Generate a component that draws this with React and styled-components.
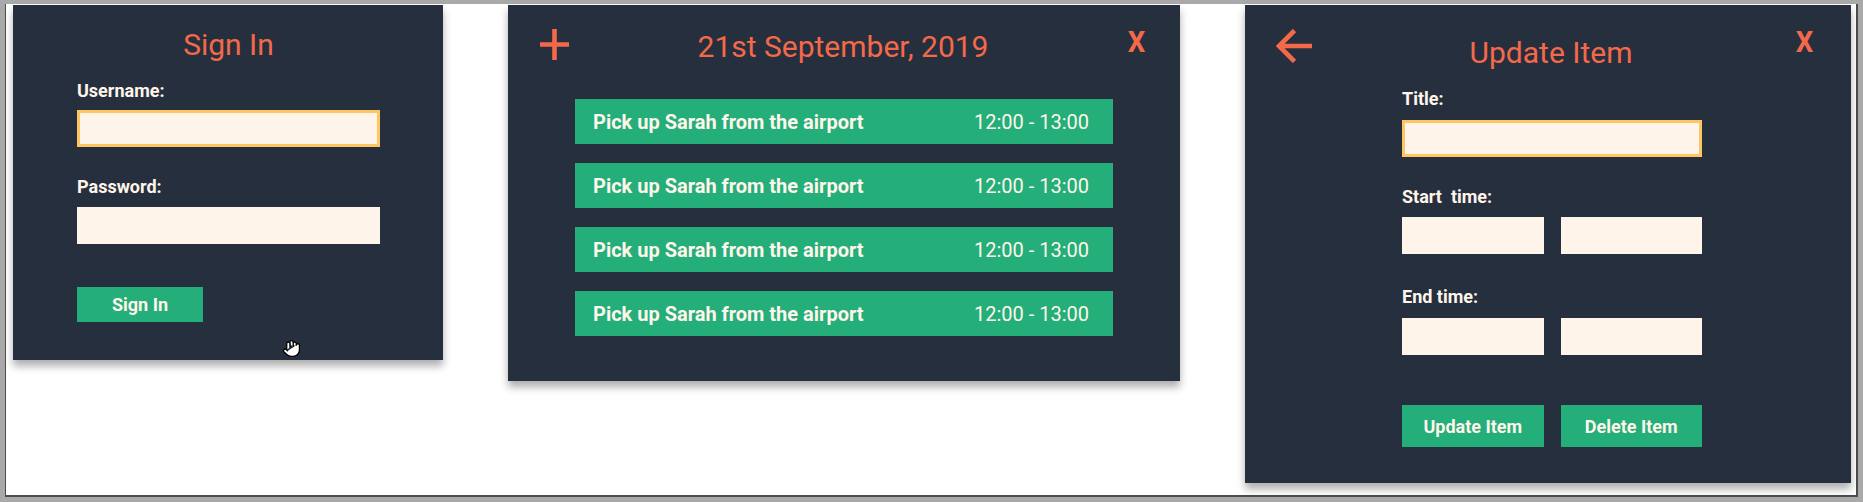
import React from "react";
import styled, { createGlobalStyle } from "styled-components";
import { Hand } from "lucide-react";

const GlobalStyle = createGlobalStyle`
  html, body {
    margin: 0;
    padding: 0;
    background: #a9a9a9;
    font-family: Roboto, "Liberation Sans", sans-serif;
  }
`;

const ORANGE = "#f4694a";
const GREEN = "#23ae7a";
const CREAM = "#fff5ea";
const PANEL = "#262f3d";

const items = [1, 2, 3, 4].map((id) => ({
  id,
  title: "Pick up Sarah from the airport",
  time: "12:00 - 13:00",
}));

const App = () => {
  return (
    <SCPage>
      <GlobalStyle />
      <SCFrame>
        <SCPanel $w={430} $pad="22px 63px 38px 64px">
          <SCTitle>Sign In</SCTitle>
          <SCLabel $mt={17} $mb={9}>Username:</SCLabel>
          <SCInput $active type="text" />
          <SCLabel $mt={29} $mb={10}>Password:</SCLabel>
          <SCInput type="password" />
          <SCButton $mt={43} $w={126} $h={35}>
            Sign In
          </SCButton>
          <SCCursor>
            <Hand size={19} fill="#ffffff" stroke="#000000" strokeWidth={1.6} />
          </SCCursor>
        </SCPanel>

        <SCPanel $w={672} $pad="24px 34px 45px 32px">
          <SCHeader>
            <SCIconButton aria-label="add">
              <svg width="29" height="31" viewBox="0 0 29 31">
                <path
                  d="M14.5 0 V31 M0 15.5 H29"
                  stroke={ORANGE}
                  strokeWidth="4.6"
                  fill="none"
                />
              </svg>
            </SCIconButton>
            <SCTitle>21st September, 2019</SCTitle>
            <SCClose>X</SCClose>
          </SCHeader>
          <SCList>
            {items.map((item) => (
              <SCItem key={item.id}>
                <SCItemTitle>{item.title}</SCItemTitle>
                <SCItemTime>{item.time}</SCItemTime>
              </SCItem>
            ))}
          </SCList>
        </SCPanel>

        <SCPanel $w={606} $pad="24px 37px 36px 29px">
          <SCHeader>
            <SCIconButton aria-label="back">
              <svg width="38" height="34" viewBox="0 0 38 34">
                <path
                  d="M38 17 H6 M20.5 1.5 L5 17 L20.5 32.5"
                  stroke={ORANGE}
                  strokeWidth="4.6"
                  fill="none"
                  strokeLinejoin="miter"
                />
              </svg>
            </SCIconButton>
            <SCTitle $mt={6} $ml={14}>
              Update Item
            </SCTitle>
            <SCClose>X</SCClose>
          </SCHeader>
          <SCForm>
            <SCLabel $mt={17} $mb={11}>Title:</SCLabel>
            <SCInput $active type="text" />
            <SCLabel $mt={29} $mb={10}>{"Start  time:"}</SCLabel>
            <SCPair>
              <SCInput type="text" />
              <SCInput type="text" />
            </SCPair>
            <SCLabel $mt={32} $mb={11}>End time:</SCLabel>
            <SCPair>
              <SCInput type="text" />
              <SCInput type="text" />
            </SCPair>
            <SCPair $mt={50}>
              <SCButton $h={42}>Update Item</SCButton>
              <SCButton $h={42}>Delete Item</SCButton>
            </SCPair>
          </SCForm>
        </SCPanel>
      </SCFrame>
    </SCPage>
  );
};

export default App;

const SCPage = styled.div`
  box-sizing: border-box;
  height: 502px;
  padding: 4px 5px 0 5px;
`;

const SCFrame = styled.div`
  box-sizing: border-box;
  height: 493px;
  background: #ffffff;
  border-left: 1px solid #4d4d4d;
  border-right: 2px solid #4d4d4d;
  border-bottom: 2px solid #4d4d4d;
  padding: 1px 5px 0 7px;
  display: flex;
  align-items: flex-start;
  gap: 65px;
`;

const SCPanel = styled.section`
  position: relative;
  box-sizing: border-box;
  flex-shrink: 0;
  width: ${(props) => props.$w}px;
  padding: ${(props) => props.$pad};
  background: ${PANEL};
  box-shadow: 0 6px 8px rgba(0, 0, 0, 0.32);
  display: flex;
  flex-direction: column;
`;

const SCTitle = styled.h1`
  margin: ${(props) => props.$mt || 0}px 0 0 ${(props) => props.$ml || 0}px;
  font-size: 30px;
  font-weight: 400;
  line-height: 36px;
  color: ${ORANGE};
  text-align: center;
  white-space: nowrap;
`;

const SCLabel = styled.label`
  display: block;
  margin-top: ${(props) => props.$mt}px;
  margin-bottom: ${(props) => props.$mb}px;
  font-size: 18px;
  font-weight: 700;
  line-height: 21px;
  color: ${CREAM};
  white-space: pre;
`;

const SCInput = styled.input`
  display: block;
  box-sizing: border-box;
  width: 100%;
  height: 37px;
  margin: 0;
  padding: 0 8px;
  border: ${(props) => (props.$active ? "3px solid #fdc662" : "none")};
  background: #fff4ea;
  outline: none;
  font-family: Roboto, sans-serif;
  font-size: 16px;
`;

const SCButton = styled.button`
  display: block;
  box-sizing: border-box;
  width: ${(props) => (props.$w ? `${props.$w}px` : "100%")};
  height: ${(props) => props.$h}px;
  margin-top: ${(props) => props.$mt || 0}px;
  padding: 0;
  border: none;
  background: ${GREEN};
  color: ${CREAM};
  font-family: Roboto, sans-serif;
  font-size: 18px;
  font-weight: 700;
  cursor: pointer;
`;

const SCCursor = styled.div`
  position: absolute;
  left: 269px;
  top: 334px;
  line-height: 0;
`;

const SCHeader = styled.div`
  display: grid;
  grid-template-columns: 1fr auto 1fr;
  align-items: start;
`;

const SCIconButton = styled.div`
  justify-self: start;
  line-height: 0;
`;

const SCClose = styled.div`
  justify-self: end;
  margin-top: -2px;
  font-size: 30px;
  font-weight: 700;
  line-height: 30px;
  color: ${ORANGE};
  transform: scaleX(0.92);
`;

const SCList = styled.div`
  display: flex;
  flex-direction: column;
  gap: 19px;
  margin: 34px 33px 0 35px;
`;

const SCItem = styled.div`
  display: flex;
  align-items: center;
  justify-content: space-between;
  height: 45px;
  padding: 0 24px 0 18px;
  background: ${GREEN};
  color: ${CREAM};
  font-size: 20px;
  line-height: 24px;
`;

const SCItemTitle = styled.span`
  font-weight: 700;
`;

const SCItemTime = styled.span`
  font-weight: 400;
`;

const SCForm = styled.div`
  width: 300px;
  margin-left: 128px;
`;

const SCPair = styled.div`
  display: grid;
  grid-template-columns: 1fr 1fr;
  gap: 17px;
  margin-top: ${(props) => props.$mt || 0}px;
`;
